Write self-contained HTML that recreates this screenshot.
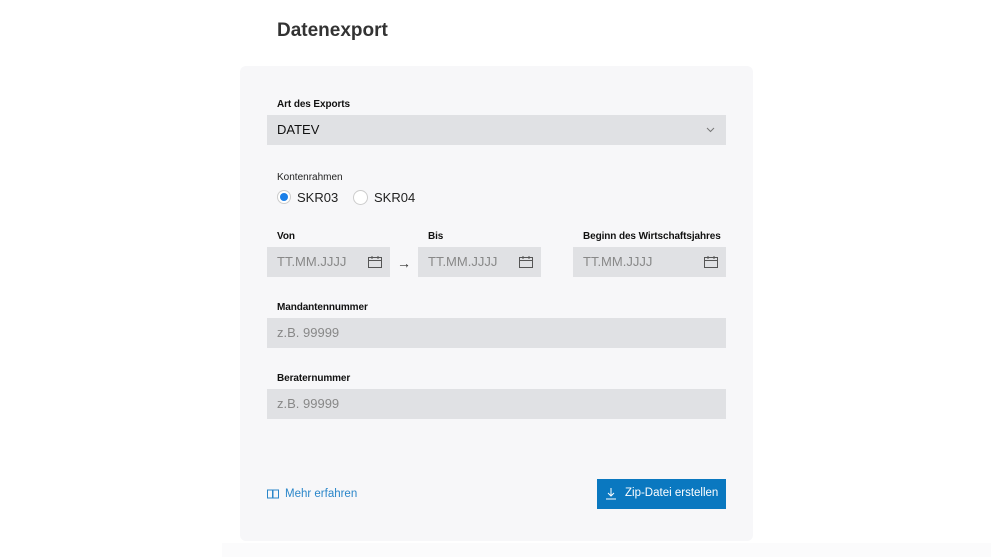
<!DOCTYPE html>
<html><head><style>
*{box-sizing:border-box;margin:0;padding:0}
body{width:991px;height:557px;background:#fff;font-family:"Liberation Sans",sans-serif;position:relative;overflow:hidden;color:#222}
.a{position:absolute}
h1{position:absolute;left:277px;top:20px;font-size:19px;font-weight:bold;color:#333}
.card{left:240px;top:66px;width:513px;height:475px;background:#f7f7f9;border-radius:6px}
.strip{left:222px;top:543px;width:769px;height:14px;background:#fbfbfc}
.lbl{font-size:10px;font-weight:bold;color:#111;letter-spacing:-0.1px}
.inp{background:#e0e1e4;height:30px;font-size:13px;line-height:30px;padding-left:10px;color:#888}
.cal{position:absolute;right:8px;top:9px}
</style></head><body>
<h1>Datenexport</h1>
<div class="a strip"></div>
<div class="a card"></div>
<div class="a lbl" style="left:277px;top:99px">Art des Exports</div>
<div class="a inp" style="left:267px;top:115px;width:459px;color:#111">DATEV
<svg class="a" style="right:11px;top:12px" width="9" height="6" viewBox="0 0 9 6"><path d="M1 1l3.5 3.5L8 1" fill="none" stroke="#777" stroke-width="1"/></svg></div>
<div class="a" style="left:277px;top:172px;font-size:10px;color:#222">Kontenrahmen</div>
<div class="a" style="left:277px;top:190px;width:14px;height:14px;border-radius:50%;background:#fff;border:1px solid #ccc"><div style="margin:2px;width:8px;height:8px;border-radius:50%;background:#1a7fe8"></div></div>
<div class="a" style="left:297px;top:190px;font-size:13px">SKR03</div>
<div class="a" style="left:353px;top:190px;width:15px;height:15px;border-radius:50%;background:#fff;border:1px solid #ccc"></div>
<div class="a" style="left:374px;top:190px;font-size:13px">SKR04</div>
<div class="a lbl" style="left:277px;top:231px">Von</div>
<div class="a lbl" style="left:428px;top:231px">Bis</div>
<div class="a lbl" style="left:583px;top:231px">Beginn des Wirtschaftsjahres</div>
<div class="a inp" style="left:267px;top:247px;width:123px">TT.MM.JJJJ<svg class="cal" width="14" height="12" viewBox="0 0 14 12"><rect x="0.5" y="1.5" width="13" height="10" fill="none" stroke="#555"/><path d="M0.5 4.5h13M4 0v3M10 0v3" stroke="#555"/></svg></div>
<div class="a" style="left:397px;top:255px;font-size:14px;color:#333">→</div>
<div class="a inp" style="left:418px;top:247px;width:123px">TT.MM.JJJJ<svg class="cal" width="14" height="12" viewBox="0 0 14 12"><rect x="0.5" y="1.5" width="13" height="10" fill="none" stroke="#555"/><path d="M0.5 4.5h13M4 0v3M10 0v3" stroke="#555"/></svg></div>
<div class="a inp" style="left:573px;top:247px;width:153px">TT.MM.JJJJ<svg class="cal" width="14" height="12" viewBox="0 0 14 12"><rect x="0.5" y="1.5" width="13" height="10" fill="none" stroke="#555"/><path d="M0.5 4.5h13M4 0v3M10 0v3" stroke="#555"/></svg></div>
<div class="a lbl" style="left:277px;top:302px">Mandantennummer</div>
<div class="a inp" style="left:267px;top:318px;width:459px">z.B. 99999</div>
<div class="a lbl" style="left:277px;top:373px">Beraternummer</div>
<div class="a inp" style="left:267px;top:389px;width:459px">z.B. 99999</div>
<svg class="a" style="left:267px;top:489px" width="12" height="10" viewBox="0 0 12 10"><path d="M0.5 1h5v8h-5zM6 1h5.5v8H6z" fill="none" stroke="#2a86c9"/></svg>
<div class="a" style="left:285px;top:488px;font-size:11.5px;color:#2a86c9">Mehr erfahren</div>
<div class="a" style="left:597px;top:479px;width:129px;height:30px;background:#0a78c0"></div>
<svg class="a" style="left:605px;top:488px" width="12" height="12" viewBox="0 0 12 12"><path d="M6 0v8M3 5l3 3 3-3M1 11h10" fill="none" stroke="#fff"/></svg>
<div class="a" style="left:625px;top:487px;font-size:11.5px;color:#fff">Zip-Datei erstellen</div>
</body></html>
